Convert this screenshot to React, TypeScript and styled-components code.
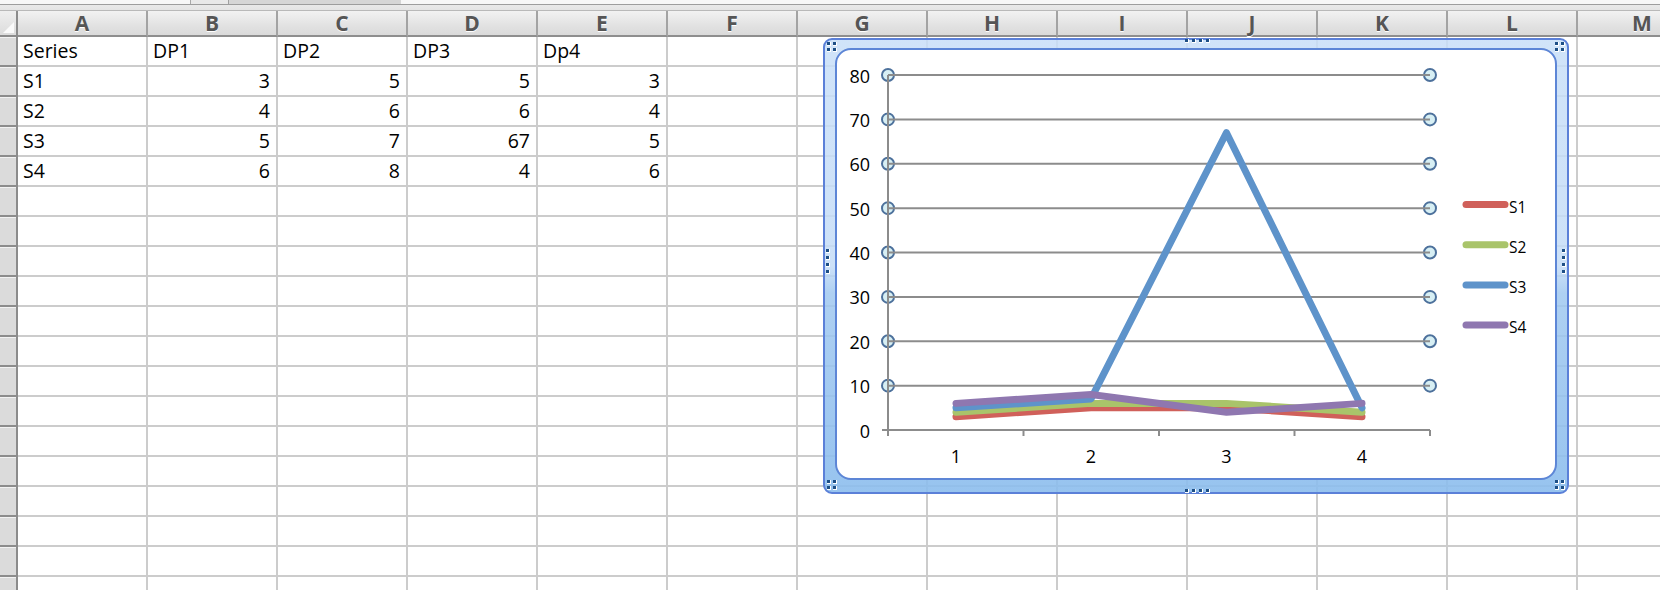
import styled, { createGlobalStyle } from "styled-components";

const GlobalStyle = createGlobalStyle`
	html, body {
		margin: 0;
		padding: 0;
		background: #ffffff;
		overflow: hidden;
	}
	body {
		font-family: "Open Sans", "Liberation Sans", sans-serif;
	}
`;

const columns = ["A", "B", "C", "D", "E", "F", "G", "H", "I", "J", "K", "L", "M"];
const rowCount = 19;

const data: (string | number)[][] = [
	["Series", "DP1", "DP2", "DP3", "Dp4"],
	["S1", 3, 5, 5, 3],
	["S2", 4, 6, 6, 4],
	["S3", 5, 7, 67, 5],
	["S4", 6, 8, 4, 6],
];

const series = [
	{ name: "S1", color: "#d0605a", values: [3, 5, 5, 3] },
	{ name: "S2", color: "#a9c46a", values: [4, 6, 6, 4] },
	{ name: "S3", color: "#5e93ca", values: [5, 7, 67, 5] },
	{ name: "S4", color: "#8f77b0", values: [6, 8, 4, 6] },
];

const Sheet = styled.div`
	position: relative;
	width: 1660px;
	height: 590px;
	overflow: hidden;
	background: #fff;
`;

const TopBar = styled.div`
	position: relative;
	height: 11px;
	box-sizing: border-box;
	background: linear-gradient(to bottom, #f7f7f7 0, #f7f7f7 4px, #9d9d9d 4px, #9d9d9d 5px, #e9e9e9 5px, #e4e4e4 10px);
	border-bottom: 1px solid #b9b9b9;
`;

const ScrollThumb = styled.div`
	position: absolute;
	left: 190px;
	top: 0;
	width: 210px;
	height: 4px;
	background: #d6d6d6;
	border-left: 1px solid #a8a8a8;
	box-shadow: inset 37px 0 0 #e8e8e8, inset 38px 0 0 #9f9f9f;
`;

const Grid = styled.div`
	display: grid;
	grid-template-columns: 18px repeat(${columns.length}, 130px);
	grid-auto-rows: 30px;
	grid-template-rows: 26px;
`;

const Corner = styled.div`
	position: relative;
	box-sizing: border-box;
	background: linear-gradient(to bottom, #efefef, #dcdcdc);
	border-right: 2px solid #8b8b8b;
	border-bottom: 2px solid #8b8b8b;
	&::after {
		content: "";
		position: absolute;
		right: 2px;
		bottom: 2px;
		border-style: solid;
		border-width: 0 0 11px 11px;
		border-color: transparent transparent #fafafa transparent;
	}
`;

const ColHead = styled.div`
	box-sizing: border-box;
	display: flex;
	align-items: center;
	justify-content: center;
	background: linear-gradient(to bottom, #f2f2f2, #e2e2e2 60%, #dadada);
	border-right: 2px solid #a3a3a3;
	border-bottom: 2px solid #8e8e8e;
	color: #555;
	font-family: "Open Sans", "Liberation Sans", sans-serif;
	font-weight: 700;
	font-size: 21px;
	line-height: 24px;
	text-shadow: 0 1px 0 #ffffff;
`;

const RowHead = styled.div`
	box-sizing: border-box;
	background: #dbdbdb;
	border-right: 2px solid #8b8b8b;
	border-bottom: 2px solid #8c8c8c;
	box-shadow: inset 0 1px 0 #f2f2f2;
`;

const Cell = styled.div<{ $numeric?: boolean }>`
	box-sizing: border-box;
	border-right: 2px solid #cccccc;
	border-bottom: 2px solid #cccccc;
	padding: 0 ${(p) => (p.$numeric ? "6px" : "4px")} 0 ${(p) => (p.$numeric ? "4px" : "5px")};
	text-align: ${(p) => (p.$numeric ? "right" : "left")};
	font-family: "Open Sans", "Liberation Sans", sans-serif;
	font-size: 19.5px;
	line-height: 27px;
	color: #000;
	white-space: nowrap;
	overflow: hidden;
`;

const ChartFrame = styled.div`
	position: absolute;
	left: 823px;
	top: 38px;
	width: 746px;
	height: 456px;
	box-sizing: border-box;
	display: flex;
	padding: 8px 10px 12px 10px;
	border: 2px solid #5b80d8;
	border-radius: 9px;
	background: linear-gradient(
		to bottom,
		rgba(200, 223, 248, 0.85) 0%,
		rgba(196, 220, 247, 0.85) 50%,
		rgba(160, 200, 240, 0.85) 56%,
		rgba(140, 189, 237, 0.9) 100%
	);
`;

const ChartBody = styled.div`
	flex: 1;
	display: flex;
	box-sizing: border-box;
	background: #fff;
	border: 2px solid #5d86d6;
	border-radius: 16px;
	overflow: hidden;
	svg {
		display: block;
	}
`;

type HandleSpot = "tl" | "tc" | "tr" | "ml" | "mr" | "bl" | "bc" | "br";

const Handle = styled.svg<{ $spot: HandleSpot }>`
	position: absolute;
	${({ $spot }) => {
		switch ($spot) {
			case "tl": return "left: 0px; top: 0px;";
			case "tc": return "left: 359px; top: -2px;";
			case "tr": return "right: 0px; top: 0px;";
			case "ml": return "left: 0px; top: 208px;";
			case "mr": return "right: 0px; top: 208px;";
			case "bl": return "left: 0px; bottom: 0px;";
			case "bc": return "left: 359px; bottom: -2px;";
			default: return "right: 0px; bottom: 0px;";
		}
	}}
`;

function Dots({ spot }: { spot: HandleSpot }) {
	let pts: [number, number][] = [];
	let w = 14;
	let h = 14;
	if (spot === "tc" || spot === "bc") {
		w = 28; h = 6;
		pts = [[1, 1], [8, 1], [15, 1], [22, 1]];
	} else if (spot === "ml" || spot === "mr") {
		w = 6; h = 28;
		pts = [[1, 1], [1, 8], [1, 15], [1, 22]];
	} else {
		pts = [[2, 2], [8, 2], [2, 8], [8, 8]];
	}
	return (
		<Handle $spot={spot} width={w} height={h} viewBox={`0 0 ${w} ${h}`}>
			{pts.map(([x, y], i) => (
				<g key={i}>
					<rect x={x} y={y} width={4} height={4} fill="#ffffff" />
					<rect x={x} y={y} width={3} height={3} fill="#1d4f86" />
				</g>
			))}
		</Handle>
	);
}

const Y0 = 430;
const UNIT = 4.4375;
const XS = [956, 1091, 1226.5, 1362];
const LEFT = 888;
const RIGHT = 1430;
const yOf = (v: number) => Y0 - v * UNIT;

function LineChart() {
	const levels = [10, 20, 30, 40, 50, 60, 70, 80];
	const ticks = [LEFT, 1023.5, 1159, 1294.5, RIGHT];
	return (
		<svg width={718} height={428} viewBox="837 50 718 428">
			{levels.map((v) => (
				<g key={v}>
					<circle cx={LEFT} cy={yOf(v)} r={6} fill="#d7eff4" stroke="#4d719c" strokeWidth={2} />
					<circle cx={RIGHT} cy={yOf(v)} r={6} fill="#d7eff4" stroke="#4d719c" strokeWidth={2} />
					<line x1={LEFT} x2={RIGHT} y1={yOf(v)} y2={yOf(v)} stroke="#8c8c8c" strokeWidth={2} />
				</g>
			))}
			<line x1={LEFT} x2={LEFT} y1={yOf(80)} y2={Y0 + 6} stroke="#8c8c8c" strokeWidth={2} />
			<line x1={882} x2={RIGHT} y1={Y0} y2={Y0} stroke="#8c8c8c" strokeWidth={2} />
			{ticks.map((x) => (
				<line key={x} x1={x} x2={x} y1={Y0} y2={Y0 + 6} stroke="#8c8c8c" strokeWidth={2} />
			))}
			<g fontFamily='"Open Sans", "Liberation Sans", sans-serif' fontSize={18} fill="#000">
				{[0, ...levels].map((v) => (
					<text key={v} x={870} y={yOf(v) + 7.5} textAnchor="end">{v}</text>
				))}
				{XS.map((x, i) => (
					<text key={i} x={x} y={462.5} textAnchor="middle">{i + 1}</text>
				))}
			</g>
			{series.map((s) => (
				<polyline
					key={s.name}
					points={s.values.map((v, i) => `${XS[i]},${yOf(v)}`).join(" ")}
					fill="none"
					stroke={s.color}
					strokeWidth={7}
					strokeLinejoin="round"
					strokeLinecap="round"
				/>
			))}
			<g fontFamily='"Open Sans", "Liberation Sans", sans-serif' fontSize={15.5} fill="#000">
				{series.map((s, i) => {
					const y = 204.5 + i * 40.2;
					return (
						<g key={s.name}>
							<line x1={1466} x2={1505} y1={y} y2={y} stroke={s.color} strokeWidth={7} strokeLinecap="round" />
							<text x={1509} y={y + 8.3}>{s.name}</text>
						</g>
					);
				})}
			</g>
		</svg>
	);
}

export default function App() {
	return (
		<Sheet>
			<GlobalStyle />
			<TopBar>
				<ScrollThumb />
			</TopBar>
			<Grid>
				<Corner />
				{columns.map((c) => (
					<ColHead key={c}>{c}</ColHead>
				))}
				{Array.from({ length: rowCount }).map((_, r) => (
					<>
						<RowHead key={`h${r}`} />
						{columns.map((c, ci) => {
							const value = data[r]?.[ci];
							return (
								<Cell key={`${r}-${c}`} $numeric={typeof value === "number"}>
									{value ?? ""}
								</Cell>
							);
						})}
					</>
				))}
			</Grid>
			<ChartFrame>
				{(["tl", "tc", "tr", "ml", "mr", "bl", "bc", "br"] as HandleSpot[]).map((s) => (
					<Dots key={s} spot={s} />
				))}
				<ChartBody>
					<LineChart />
				</ChartBody>
			</ChartFrame>
		</Sheet>
	);
}
